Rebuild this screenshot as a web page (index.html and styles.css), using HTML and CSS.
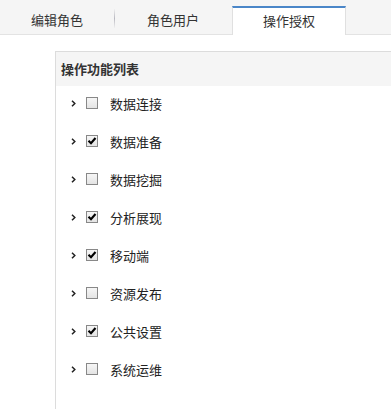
FILE: index.html
```html
<!DOCTYPE html>
<html lang="zh-CN">
<head>
    <meta charset="UTF-8">
    <title>操作授权</title>
    <link rel="stylesheet" href="styles.css">
</head>
<body>
    <div class="tabs">
        <div class="tab first">编辑角色</div>
        <div class="tab sep">角色用户</div>
        <div class="tab active">操作授权</div>
    </div>

    <div class="panel">
        <div class="panel-head">操作功能列表</div>
        <ul class="func-list">
            <li class="row"><span class="arrow"></span><span class="check"></span>数据连接</li>
            <li class="row"><span class="arrow"></span><span class="check on"></span>数据准备</li>
            <li class="row"><span class="arrow"></span><span class="check"></span>数据挖掘</li>
            <li class="row"><span class="arrow"></span><span class="check on"></span>分析展现</li>
            <li class="row"><span class="arrow"></span><span class="check on"></span>移动端</li>
            <li class="row"><span class="arrow"></span><span class="check"></span>资源发布</li>
            <li class="row"><span class="arrow"></span><span class="check on"></span>公共设置</li>
            <li class="row"><span class="arrow"></span><span class="check"></span>系统运维</li>
        </ul>
    </div>
</body>
</html>
```

FILE: styles.css
```css
* {
    margin: 0;
    padding: 0;
    box-sizing: border-box;
}

body {
    font-family: "Noto Sans CJK SC", "Noto Sans", sans-serif;
    font-size: 13px;
    color: #222;
    background: #fff;
    overflow: hidden;
}

.tabs {
    display: flex;
    height: 35px;
    background: #f5f5f5;
    border-bottom: 1px solid #e3e3e3;
    padding-top: 6px;
}

.tab {
    width: 118px;
    height: 28px;
    line-height: 28px;
    text-align: center;
    color: #333;
    position: relative;
}

.tab.first {
    width: 114px;
}

.tab.sep::before {
    content: '';
    position: absolute;
    left: 0;
    top: 3px;
    height: 19px;
    width: 1px;
    background: linear-gradient(#f0f0f0, #b8b8c0 50%, #f0f0f0);
}

.tab.active {
    width: 114px;
    height: 29px;
    background: #fff;
    border-top: 2px solid #4a86c8;
    border-left: 1px solid #e0e0e0;
    border-right: 1px solid #e0e0e0;
    line-height: 25px;
}

.panel {
    margin: 16px 0 0 55px;
    border-top: 1px solid #dcdcdc;
    border-left: 1px solid #dcdcdc;
    height: 358px;
}

.panel-head {
    height: 34px;
    line-height: 34px;
    padding-left: 5px;
    background: #f5f5f5;
    font-weight: bold;
    color: #333;
}

.func-list {
    list-style: none;
}

.row {
    display: flex;
    align-items: center;
    height: 38px;
    padding: 0 0 4px 15px;
}

.arrow {
    width: 5px;
    height: 7px;
    margin-right: 10px;
    background: url("data:image/svg+xml,%3Csvg xmlns='http://www.w3.org/2000/svg' width='5' height='7'%3E%3Cpolyline points='1,0.8 3.8,3.5 1,6.2' fill='none' stroke='%23222' stroke-width='1.5'/%3E%3C/svg%3E") no-repeat;
}

.check {
    width: 12px;
    height: 12px;
    margin-right: 12px;
    border: 1px solid #888;
    background: linear-gradient(#f6f6f6, #e4e4e4);
}

.check.on {
    background: url("data:image/svg+xml,%3Csvg xmlns='http://www.w3.org/2000/svg' width='10' height='10'%3E%3Cpolyline points='1.5,4.8 4,7.3 8.5,2' fill='none' stroke='%23000' stroke-width='2.1'/%3E%3C/svg%3E") no-repeat center, linear-gradient(#f6f6f6, #e4e4e4);
}
```
